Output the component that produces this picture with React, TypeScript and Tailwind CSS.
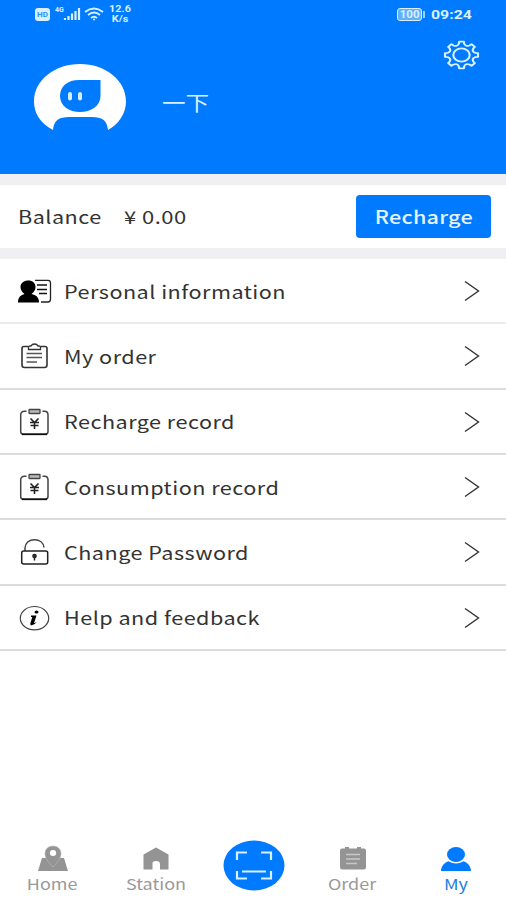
import React from 'react';

const polar = (deg: number, r: number) => {
  const a = (deg * Math.PI) / 180;
  return `${(18 + r * Math.sin(a)).toFixed(2)} ${(18 - r * Math.cos(a)).toFixed(2)}`;
};

// eight teeth with scooped valleys between them
const gearPath =
  `M${polar(-8, 16.2)}` +
  [0, 45, 90, 135, 180, 225, 270, 315]
    .map((t) => `L${polar(t + 8, 16.2)}L${polar(t + 11, 13.8)}Q${polar(t + 22.5, 10.5)} ${polar(t + 34, 13.8)}L${polar(t + 37, 16.2)}`)
    .join('') +
  'Z';

function GearIcon() {
  return (
    <svg width="37" height="30" viewBox="0 0 36 36" preserveAspectRatio="none" fill="none" stroke="#d9f0ff" strokeWidth="2.1" strokeLinejoin="round">
      <path d={gearPath} />
      <circle cx="18" cy="18" r="8" />
    </svg>
  );
}

function Avatar() {
  return (
    <svg width="94" height="68" viewBox="0 0 94 68">
      <path
        d="M20 67C7 60 1 50 1 38.500C1 17 22 1 47 1S93 17 93 38.500C93 50 86 61 75 67C74 57 69 54 59 54H36C26 54 21 57 20 67Z"
        fill="#fff"
      />
      <path d="M46 17H67.500V33C67.500 43 58 49 47 49S27 43 27 33S35 17 46 17Z" fill="#007aff" />
      <rect x="35" y="29" width="4" height="8.500" rx="2" fill="#d5eeff" />
      <rect x="45" y="29" width="4" height="8.500" rx="2" fill="#d5eeff" />
    </svg>
  );
}

function PersonalIcon() {
  return (
    <svg width="36" height="26" viewBox="0 0 36 26" fill="none" stroke="#222" strokeWidth="1.3">
      <path d="M18 2.300H31Q33.500 2.300 33.500 5V21Q33.500 24 31 24H24" />
      <path d="M20 7H30M20 11.500H30M22 15.500H30" stroke="#111" strokeWidth="1.500" />
      <path d="M1 24.500C1 19 4 17 7.500 16C4.500 14 3.500 11 3.500 9C3.500 5 7 2.500 11.300 2.500S18.500 5 18.500 9C18.500 11 17.500 14 14.500 16C19 17 22 19 22 24.500Z" fill="#000" stroke="none" />
    </svg>
  );
}

function OrderIcon() {
  return (
    <svg width="36" height="26" viewBox="0 0 36 26" fill="none" stroke="#333" strokeWidth="1.6">
      <path d="M11 3.500H7Q5 3.500 5 5.500V22Q5 24.500 7.500 24.500H27.500Q30 24.500 30 22V5.500Q30 3.500 28 3.500H24" />
      <path d="M11.500 6.500V4Q11.500 3 13 3H14Q15 1 17.500 1T21 3H22Q23.500 3 23.500 4V6.500Z" strokeWidth="1.3" />
      <path d="M9.500 10.500H25M9.500 14.500H25M9.500 19H20" strokeWidth="1.3" stroke="#555" />
    </svg>
  );
}

function RecordIcon() {
  return (
    <svg width="36" height="28" viewBox="0 0 36 28" fill="none" stroke="#444" strokeWidth="1.5">
      <path d="M9.500 3.300H7.500Q3.700 3.300 3.700 7V23.500Q3.700 26.300 6.500 26.300H28Q31 26.300 31 23.500V7Q31 3.300 27.500 3.300H25.500" />
      <path d="M5 26.300H30" stroke="#111" strokeWidth="1.700" />
      <rect x="12" y="1.500" width="11" height="4" rx="0.500" fill="#bbb" strokeWidth="1.300" />
      <path d="M13.500 10.500L17.500 14.500L21.500 10.500M13 14.500H22M13.500 17.500H21.500M17.500 14.500V21" stroke="#222" strokeWidth="1.600" />
    </svg>
  );
}

function LockIcon() {
  return (
    <svg width="36" height="28" viewBox="0 0 36 28" fill="none" stroke="#222" strokeWidth="1.500">
      <path d="M8 13V10C8 5 12 1.700 17.500 1.700C22.500 1.700 26.500 4.500 27 9.500" stroke="#444" />
      <rect x="4.700" y="13" width="26" height="13" rx="2" />
      <circle cx="17.500" cy="18" r="1.700" fill="#333" strokeWidth="1.200" />
      <path d="M17.500 19V22.500" />
    </svg>
  );
}

function InfoIcon() {
  return (
    <svg width="36" height="28" viewBox="0 0 36 28">
      <ellipse cx="17.500" cy="14.200" rx="14.200" ry="11.700" fill="none" stroke="#444" strokeWidth="1.200" />
      <ellipse cx="19.500" cy="8" rx="2" ry="1.500" fill="#000" />
      <path d="M14 11.500H19.500L17 19Q17.300 19.300 19.500 18Q17.500 21.300 14.800 21.300Q12.800 21.300 13.500 18.700L15.300 13H14Z" fill="#000" />
    </svg>
  );
}

const rows = [
  { label: 'Personal information', Icon: PersonalIcon },
  { label: 'My order', Icon: OrderIcon },
  { label: 'Recharge record', Icon: RecordIcon },
  { label: 'Consumption record', Icon: RecordIcon },
  { label: 'Change Password', Icon: LockIcon },
  { label: 'Help and feedback', Icon: InfoIcon },
];

function StatusBar() {
  return (
    <div className="flex h-[30px] items-start justify-between pl-[35px] pr-[34px] text-[#d9f0ff]">
      <div className="flex items-start">
        <div className="mt-[8px] flex h-[13px] w-[15px] items-center justify-center rounded-[3px] bg-[#d9f0ff] text-[8px] font-bold leading-none text-[#2a8fff]">
          HD
        </div>
        <span className="ml-[5px] mt-[7px] w-[8px] text-[7px] font-bold leading-none">4G</span>
        <svg className="mt-[8px]" width="18" height="13" viewBox="0 0 18 13" stroke="currentColor" strokeWidth="2.200">
          <path d="M2 10V12M5.500 8V12M9 5.500V12M12.500 3V12M16 0V12" />
        </svg>
        <svg className="ml-[3px] mt-[7px]" width="20" height="15" viewBox="0 0 20 15" fill="none" stroke="currentColor" strokeWidth="1.900">
          <path d="M1 5Q10 -2 19 5M4 8Q10 3 16 8M7 11Q10 8.500 13 11" />
          <circle cx="10" cy="12.500" r="1" fill="currentColor" stroke="none" />
        </svg>
        <div className="ml-[4px] mt-[4px] w-[24px] text-center text-[9px] font-bold leading-[10px]">
          <div className="origin-center scale-x-[1.2]">12.6</div>
          <div className="origin-center scale-x-[1.2]">K/s</div>
        </div>
      </div>
      <div className="flex items-start">
        <div className="mt-[8px] flex h-[13px] w-[25px] items-center justify-center rounded-[3px] border border-[#d9f0ff] bg-[#5fb0ff] text-[10px] font-bold leading-none">
          <span className="scale-x-[1.15]">100</span>
        </div>
        <div className="ml-[1px] mt-[11px] h-[7px] w-[2px] bg-[#9fd0ff]" />
        <span className="ml-[6px] mt-[7px] w-[41px] origin-left scale-x-[1.22] text-[13px] font-bold leading-[15px]">
          09:24
        </span>
      </div>
    </div>
  );
}

export default function App() {
  return (
    <div className="flex h-[900px] w-[506px] flex-col overflow-hidden bg-white font-['Noto_Sans_CJK_SC','Noto_Sans',sans-serif] text-[#333]">
      <header className="h-[174px] bg-[#007aff] font-[Roboto,'Noto_Sans_CJK_SC',sans-serif]">
        <StatusBar />
        <div className="flex justify-between pl-[33px] pr-[26px]">
          <div className="flex pt-[33px]">
            <Avatar />
            <span className="ml-[35px] mt-[27px] origin-left scale-x-[1.15] text-[20.500px] leading-[28px] text-[#d9efff]">一下</span>
          </div>
          <div className="pt-[10px]">
            <GearIcon />
          </div>
        </div>
      </header>

      {/* Balance */}
      <section className="h-[85px] border-y-[11px] border-[#f0f0f2]">
        <div className="flex h-[63px] items-center pl-[18px] pr-[15px] text-[18px] tracking-[0.4px]">
          <span className="w-[106px] whitespace-nowrap">
            <span className="inline-block origin-left scale-x-[1.2]">Balance</span>
          </span>
          <span className="flex-1 whitespace-nowrap">
            <span className="inline-block origin-left scale-x-[1.22]">¥ 0.00</span>
          </span>
          <button className="flex h-[43px] w-[135px] items-center justify-center rounded-[4px] bg-[#007aff] text-[18px] font-medium tracking-[0.2px] text-[#e4f4ff]">
            <span className="scale-x-[1.2]">Recharge</span>
          </button>
        </div>
      </section>

      {/* Menu */}
      <nav className="grid h-[392px] grid-rows-6">
        {rows.map(({ label, Icon }) => (
          <div key={label} className="flex items-center border-b-2 border-[#dcdcdc] pl-[17px] pr-[25px] pt-px first:border-[#ebebeb]">
            <Icon />
            <span className="ml-[11px] flex-1 whitespace-nowrap text-[18px] tracking-[0.4px]">
              <span className="inline-block origin-left scale-x-[1.2]">{label}</span>
            </span>
            <svg width="18" height="22" viewBox="0 0 18 22" fill="none" stroke="#333" strokeWidth="1.400">
              <path d="M2 1.500L15.500 11L2 20.500" />
            </svg>
          </div>
        ))}
      </nav>

      {/* Tab bar */}
      <footer className="mt-auto flex h-[64px] pb-[4px] text-[15px] leading-[18px] text-[#999]">
        <div className="flex w-[105px] flex-col items-center pt-[8px]">
          <svg width="32" height="28" viewBox="0 0 32 28" fill="#949494">
            <path d="M5 14H27L31 27H1Z" />
            <path d="M16 23C11 18 8 14 8 9.500C8 5 11.500 2 16 2S24 5 24 9.500C24 14 21 18 16 23Z" stroke="#bbb" strokeWidth="0.600" />
            <ellipse cx="16" cy="9" rx="3.200" ry="3" fill="#fff" />
          </svg>
          <span className="mt-[3px] scale-x-[1.2]">Home</span>
        </div>
        <div className="flex w-[102px] flex-col items-center pt-[8px]">
          <svg width="28" height="28" viewBox="0 0 28 28" fill="#949494">
            <path d="M1.500 10.500L14 3.500L26.500 10.500V25.500H18V20Q18 17 14 17T10.500 20V25.500H1.500Z" />
          </svg>
          <span className="mt-[3px] scale-x-[1.2]">Station</span>
        </div>
        <div className="flex w-[94px] justify-center pt-[4px]">
          <svg width="62" height="51" viewBox="0 0 62 51">
            <ellipse cx="31" cy="25.500" rx="30.500" ry="25" fill="#007aff" />
            <path d="M24 12.500H14V20M38 12.500H48V20M14 31V38.500H24M38 38.500H48V31M19 31.500H43" fill="none" stroke="#d9f0ff" strokeWidth="2.200" />
          </svg>
        </div>
        <div className="flex w-[103px] flex-col items-center pt-[8px]">
          <svg width="28" height="28" viewBox="0 0 28 28">
            <path d="M3 4.500H6V3H10V4.500H18V3H22V4.500H25Q27 4.500 27 6.500V23Q27 25.500 24.500 25.500H3.500Q1 25.500 1 23V6.500Q1 4.500 3 4.500Z" fill="#949494" />
            <path d="M7 10.500H21M7 15H21M7 19.500H18" stroke="#c8c8c8" strokeWidth="1.400" />
          </svg>
          <span className="mt-[3px] scale-x-[1.2]">Order</span>
        </div>
        <div className="flex flex-1 flex-col items-center pl-[2px] pt-[8px] text-[#2580dc]">
          <svg width="32" height="28" viewBox="0 0 32 28" fill="#007aff">
            <ellipse cx="16" cy="10.500" rx="9" ry="7.500" />
            <path d="M1 27C1 22 5 18 8.500 17.200Q16 22 23.500 17.200C27 18 31 22 31 27Z" />
          </svg>
          <span className="mt-[3px] scale-x-[1.2]">My</span>
        </div>
      </footer>
    </div>
  );
}
